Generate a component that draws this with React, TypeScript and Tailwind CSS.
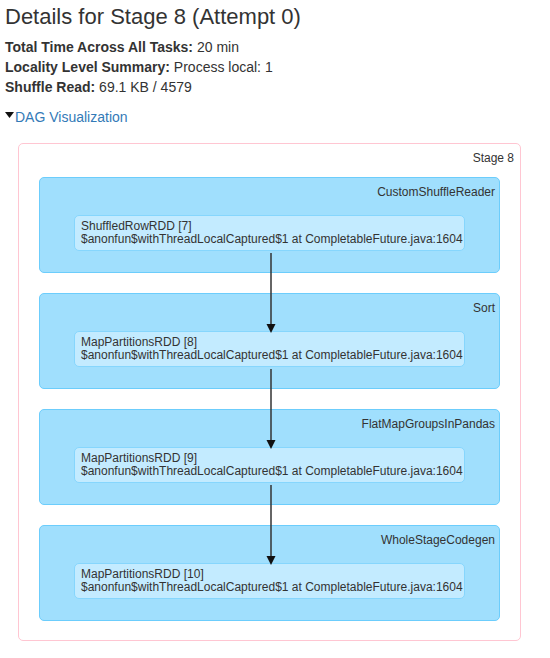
const clusters = [
  { label: "CustomShuffleReader", rdd: "ShuffledRowRDD [7]" },
  { label: "Sort", rdd: "MapPartitionsRDD [8]" },
  { label: "FlatMapGroupsInPandas", rdd: "MapPartitionsRDD [9]" },
  { label: "WholeStageCodegen", rdd: "MapPartitionsRDD [10]" },
];

const callSite = "$anonfun$withThreadLocalCaptured$1 at CompletableFuture.java:1604";

// arrows between consecutive nodes, in stage-box coordinates
const arrows = [0, 1, 2].map((i) => ({ y1: 109 + i * 116, y2: 189 + i * 116 }));

export default function App() {
  return (
    <div className="min-h-screen bg-white pl-[5px] pt-[2px] text-[#333] font-[Arial,'Liberation_Sans',sans-serif]">
      <h3 className="text-[22px] leading-[30px]">Details for Stage 8 (Attempt 0)</h3>
      <ul className="mt-[5px] text-[14px] leading-[20px]">
        <li>
          <strong>Total Time Across All Tasks:</strong> 20 min
        </li>
        <li>
          <strong>Locality Level Summary:</strong> Process local: 1
        </li>
        <li>
          <strong>Shuffle Read:</strong> 69.1 KB / 4579
        </li>
      </ul>
      <div className="mt-[10px] flex items-center text-[14px] leading-[20px] text-[#337ab7]">
        <svg width="10" height="7" viewBox="0 0 10 7" className="-mt-[3px]">
          <path d="M0 0 L9 0 L4.5 6 Z" fill="#111" />
        </svg>
        <a href="#">DAG Visualization</a>
      </div>

      <div className="relative mt-[16px] ml-[13px] w-[503px] rounded-[5px] border border-[#ffc6d2] bg-white px-[20px] pb-[19px] pt-[4px]">
        <div className="-mr-[14px] text-right text-[12px] leading-[20px]">Stage 8</div>
        <div className="mt-[9px] flex flex-col gap-[20px]">
          {clusters.map((c) => (
            <div
              key={c.label}
              className="h-[96px] rounded-[5px] border border-[#6ccdfc] bg-[#a0dffd] px-[34px] pt-[5px]"
            >
              <div className="-mr-[30px] text-right text-[12px] leading-[18px]">{c.label}</div>
              <div className="mt-[14px] h-[36px] whitespace-nowrap rounded-[5px] border border-[#86d6fd] bg-[#c3ebff] pl-[6px] pr-[2px] pt-[4px] text-[12px] leading-[13px]">
                <div>{c.rdd}</div>
                <div>{callSite}</div>
              </div>
            </div>
          ))}
        </div>
        <svg className="pointer-events-none absolute left-0 top-0" width="503" height="496">
          {arrows.map((a, i) => (
            <g key={i}>
              <line x1="252" y1={a.y1} x2="252" y2={a.y2 - 8} stroke="#333" strokeWidth="1.5" />
              <path d={`M247.5 ${a.y2 - 9} L256.5 ${a.y2 - 9} L252 ${a.y2} Z`} fill="#111" />
            </g>
          ))}
        </svg>
      </div>
    </div>
  );
}
